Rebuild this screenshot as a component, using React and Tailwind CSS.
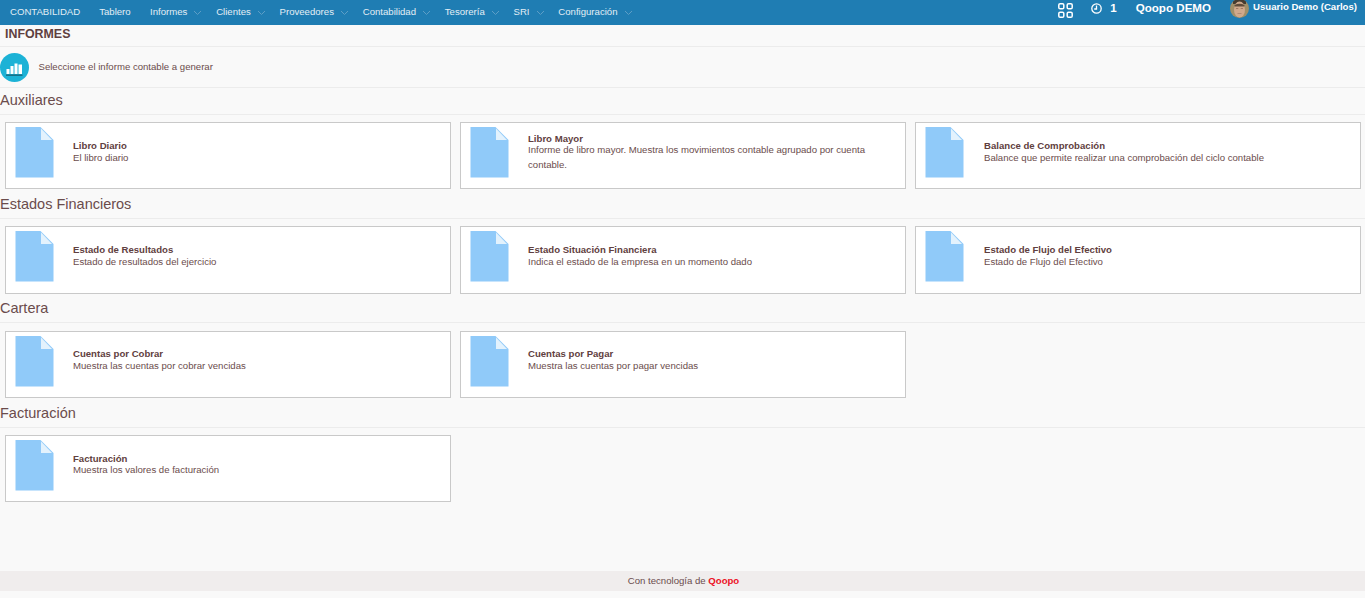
import React from "react";

const navItems = ["Informes", "Clientes", "Proveedores", "Contabilidad", "Tesorería", "SRI", "Configuración"];

const tightText = "mb-[11px]";
const tightDesc = "-mt-[3px]";

const sections = [
  { title: "Auxiliares", h: "h-[67px]", text: "mb-[10px]", desc: "-mt-[2px]", head: "h-[27px] leading-[25px]", body: "pt-[7px]", cards: [
    ["Libro Diario", "El libro diario"],
    ["Libro Mayor", "Informe de libro mayor. Muestra los movimientos contable agrupado por cuenta contable.", true],
    ["Balance de Comprobación", "Balance que permite realizar una comprobación del ciclo contable"],
  ]},
  { title: "Estados Financieros", h: "h-[68px]", text: "mb-[11px]", desc: "-mt-[2px]", head: "h-[27px] leading-[25px]", body: "pt-[7px]", cards: [
    ["Estado de Resultados", "Estado de resultados del ejercicio"],
    ["Estado Situación Financiera", "Indica el estado de la empresa en un momento dado"],
    ["Estado de Flujo del Efectivo", "Estado de Flujo del Efectivo"],
  ]},
  { title: "Cartera", h: "h-[67px]", text: "mb-[12px]", desc: "-mt-[2px]", head: "h-[26px] leading-[23px]", body: "pt-[8px]", cards: [
    ["Cuentas por Cobrar", "Muestra las cuentas por cobrar vencidas"],
    ["Cuentas por Pagar", "Muestra las cuentas por pagar vencidas"],
  ]},
  { title: "Facturación", h: "h-[67px]", text: tightText, desc: tightDesc, head: "h-[27px] leading-[25px]", body: "pt-[7px]", cards: [
    ["Facturación", "Muestra los valores de facturación"],
  ]},
];

function Chevron() {
  return (
    <svg width="9" height="6" viewBox="0 0 9 6" fill="none" className="ml-[6px] mr-[13.75px] mt-[1px] text-[#5d9ec6]">
      <path d="M1 1l3.5 3.5L8 1" stroke="currentColor" strokeWidth="1" />
    </svg>
  );
}

function FileIcon() {
  return (
    <svg width="39" height="51" viewBox="0 0 39 51" className="shrink-0">
      <path d="M0.5 0H25.5L38.5 13V50.5H0.5Z" fill="#90caf9" />
      <path d="M26 1.5L37 13H26Z" fill="#e3f2fd" />
    </svg>
  );
}

function Card({ title, text, h, textClass, descClass, last }) {
  return (
    <div className={`${h} flex items-start border border-[#c9c9c9] bg-white pl-[9px] pt-[4px]`}>
      <FileIcon />
      <div className={`${textClass} ${last ? "ml-[20px]" : "ml-[19px]"} self-center pr-[30px] text-[9.6px] leading-[12px]`}>
        <div className="font-bold text-[#5f4040]">{title}</div>
        <div className={`${descClass} leading-[15px]`}>{text}</div>
      </div>
    </div>
  );
}

export default function App() {
  return (
    <div className="flex h-[598px] flex-col overflow-hidden bg-[#f9f9f9] font-['Liberation_Sans',Arial,sans-serif] text-[#6b4c4c]">
      <header className="flex h-[25px] shrink-0 items-center bg-[#1f7db3] pl-[10px] text-[9.6px] text-[#e3eef5]">
        <span className="mr-[19px]">CONTABILIDAD</span>
        <span className="mr-[19.4px]">Tablero</span>
        {navItems.map((label) => (
          <span key={label} className="flex items-center">{label}<Chevron /></span>
        ))}
        <div className="mb-[9px] ml-auto flex items-center pr-[8px] text-white">
          <svg width="15" height="15" viewBox="0 0 15 15" fill="none" stroke="currentColor" strokeWidth="1.5" className="mr-[18px] mt-[4px]">
            <rect x="0.8" y="0.8" width="5" height="5" rx="1.3" />
            <rect x="9.2" y="0.8" width="5" height="5" rx="1.3" />
            <rect x="0.8" y="9.2" width="5" height="5" rx="1.3" />
            <rect x="9.2" y="9.2" width="5" height="5" rx="1.3" />
          </svg>
          <svg width="11" height="11" viewBox="0 0 11 11" fill="none" stroke="currentColor" strokeWidth="1.3" className="mr-[8px]">
            <circle cx="5.5" cy="5.5" r="4.7" />
            <path d="M5.5 2.6V6H3.2" />
          </svg>
          <span className="mr-[19px] mt-[1px] text-[11.5px] font-bold">1</span>
          <span className="mr-[19px] text-[11.6px] font-bold">Qoopo DEMO</span>
          <svg width="19" height="19" viewBox="0 0 19 19" className="mr-[4px] rounded-full">
            <rect width="19" height="19" fill="#a08f68" />
            <path d="M3 0H16V5H3Z" fill="#453c30" />
            <ellipse cx="9.5" cy="10.5" rx="5.5" ry="8" fill="#cfa98c" />
            <path d="M4.5 6Q9.5 3.5 14.5 6V7.5H4.5Z" fill="#5f4c3a" />
            <path d="M6 9.5H8.3M10.7 9.5H13" stroke="#8a6650" strokeWidth="0.7" />
            <path d="M7.5 14.5H11.5" stroke="#a57c68" strokeWidth="0.7" />
          </svg>
          <span className="mb-[2px] text-[9.6px] font-bold">Usuario Demo (Carlos)</span>
        </div>
      </header>

      <div className="flex h-[22px] shrink-0 items-center border-b border-[#ececec] pb-[2px] pl-[5px] text-[12.4px] font-bold text-[#5f4040]">INFORMES</div>

      <div className="flex h-[41px] shrink-0 items-center border-b border-[#ececec] text-[9.6px]">
        <svg width="29" height="29" viewBox="0 0 29 29" className="shrink-0">
          <circle cx="14.5" cy="14.5" r="14.5" fill="#1cb2d6" />
          <g fill="#fff">
            <rect x="6.5" y="16" width="3" height="5" />
            <rect x="10.5" y="13" width="3" height="8" />
            <rect x="14.5" y="10.5" width="3" height="10.5" />
            <rect x="18.5" y="11.5" width="3.5" height="9.5" />
          </g>
          <rect x="6" y="21.7" width="16.5" height="0.8" fill="#12313d" />
        </svg>
        <span className="ml-[9.5px]">Seleccione el informe contable a generar</span>
      </div>

      {sections.map((s) => (
        <section key={s.title} className="shrink-0">
          <h2 className={`${s.head} border-b border-[#ececec] text-[14.5px]`}>{s.title}</h2>
          <div className={`${s.body} grid grid-cols-3 gap-x-[9px] pb-[3px] pl-[5px] pr-[4px]`}>
            {s.cards.map(([title, text, tight], i) => (
              <Card
                key={title}
                title={title}
                text={text}
                h={s.h}
                textClass={tight ? tightText : s.text}
                descClass={tight ? tightDesc : s.desc}
                last={i === 2}
              />
            ))}
          </div>
        </section>
      ))}

      <footer className="mb-[7px] mt-auto flex h-[20px] shrink-0 items-center justify-center bg-[#f0eded] pl-[2px] text-[9.6px]">
        <span>Con tecnología de <b className="text-[#ec1226]">Qoopo</b></span>
      </footer>
    </div>
  );
}
